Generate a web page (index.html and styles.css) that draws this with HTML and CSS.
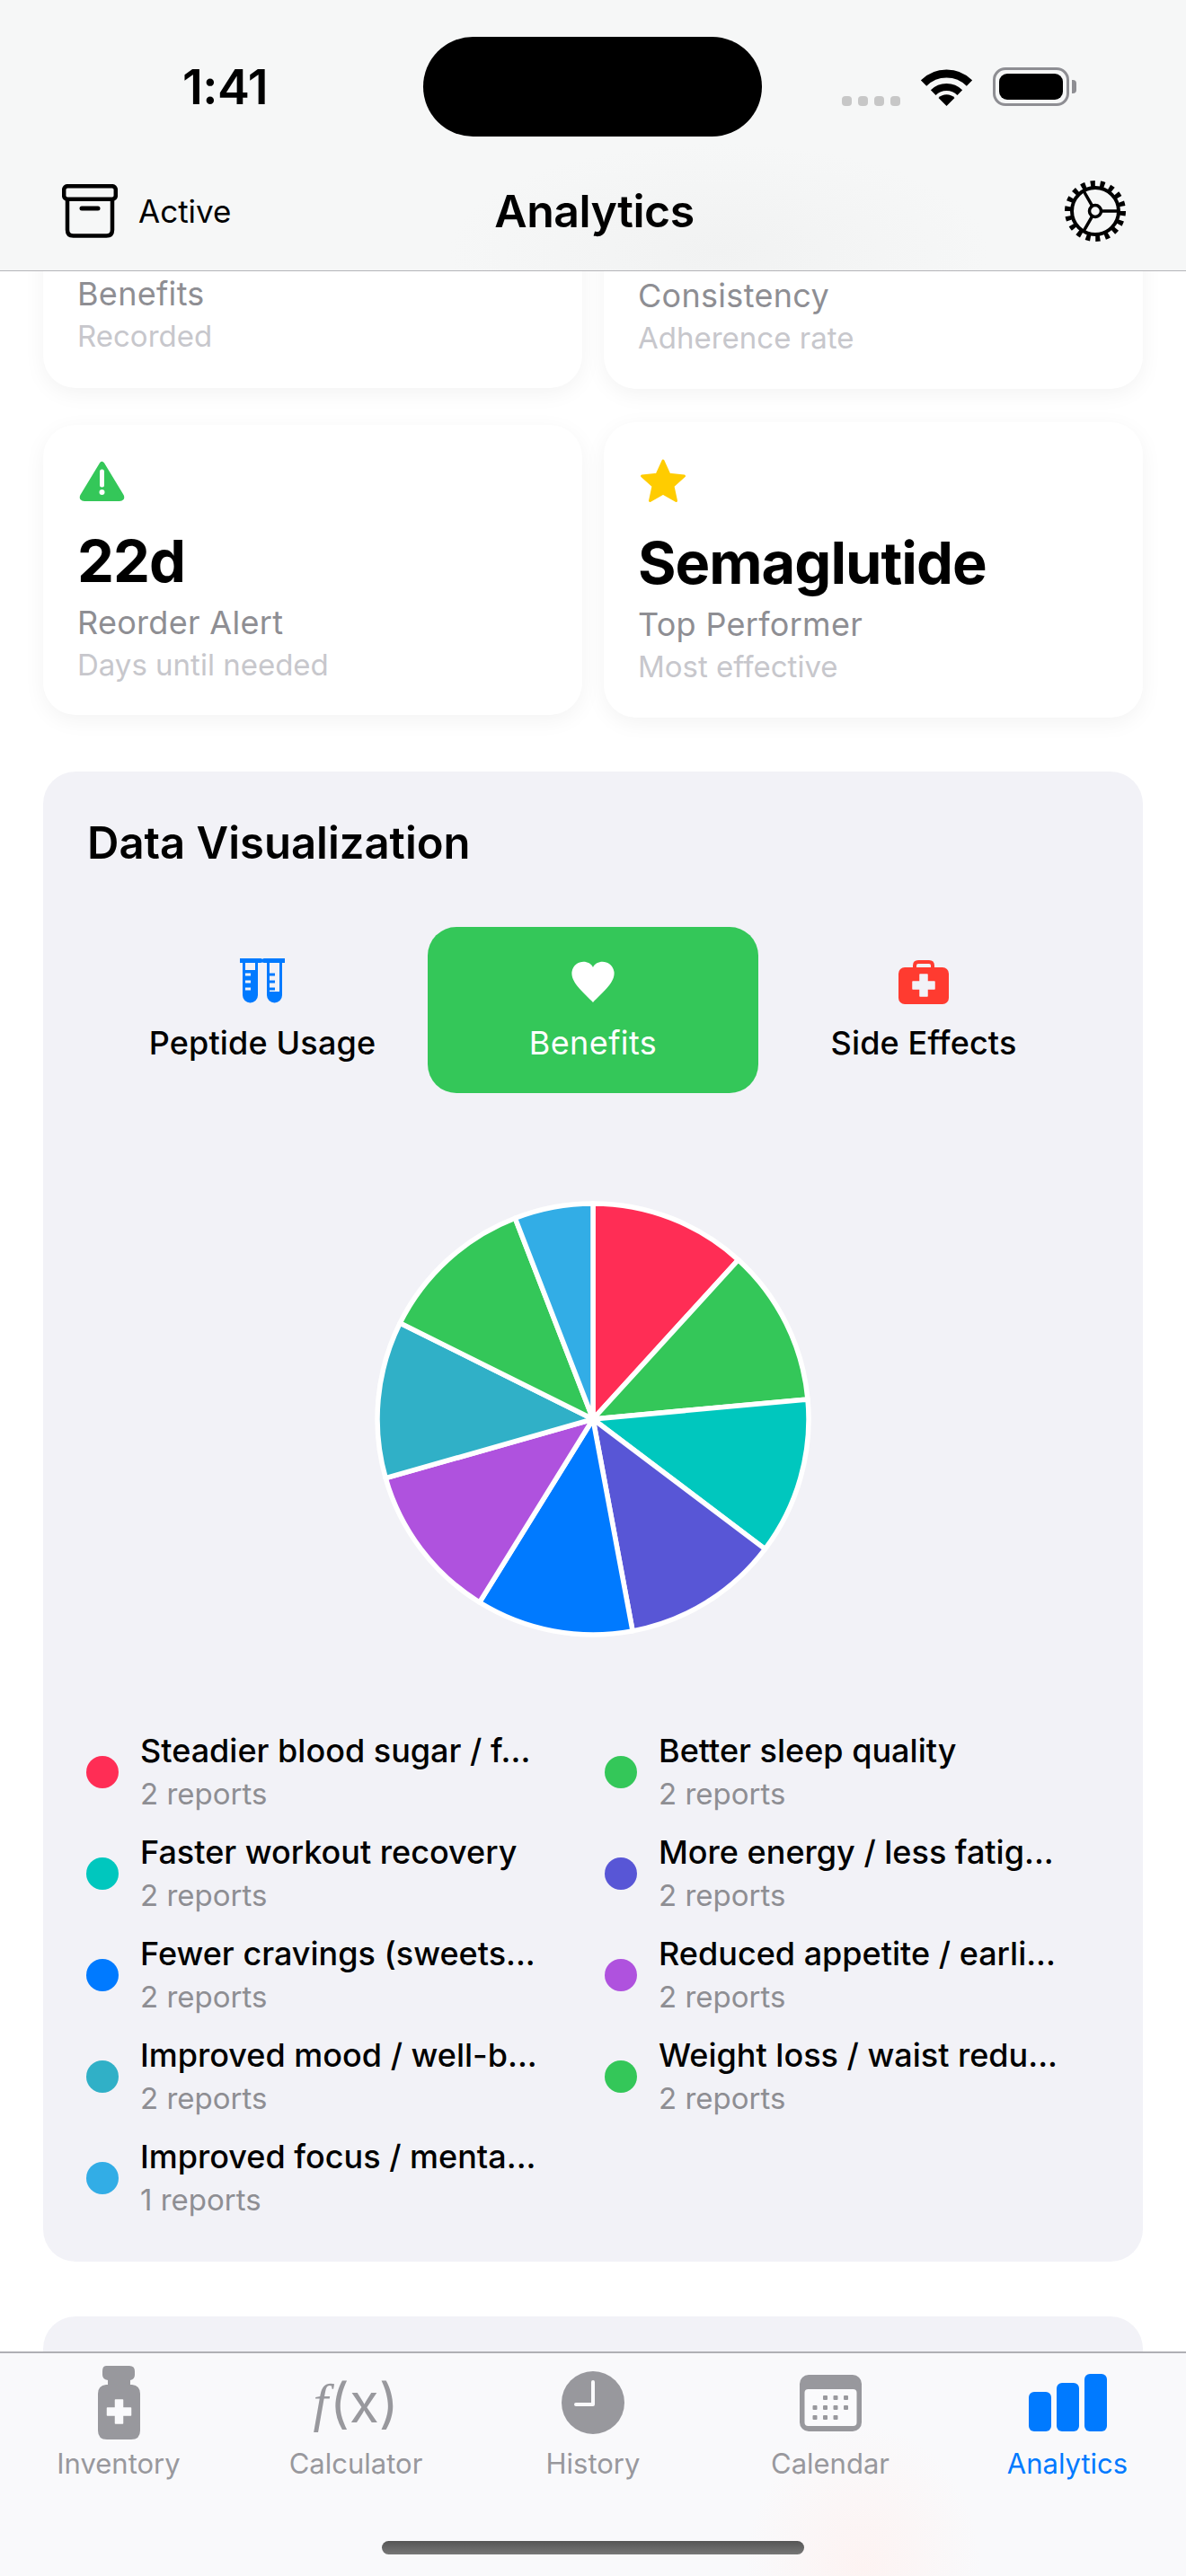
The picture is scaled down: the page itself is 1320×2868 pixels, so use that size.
FILE: index.html
```html
<!DOCTYPE html>
<html lang="en">
<head>
    <meta charset="UTF-8">
    <meta name="viewport" content="width=device-width, initial-scale=1.0">
    <title>Analytics</title>
    <link rel="stylesheet" href="styles.css">
</head>
<body>
    <div class="phone">
        <header class="top-bar">
            <div class="status-bar">
                <div class="status-time">1:41</div>
                <div class="island"></div>
                <div class="status-icons">
                    <div class="signal"><span></span><span></span><span></span><span></span></div>
                    <svg class="wifi" width="57" height="42" viewBox="0 0 57 42">
                        <path d="M3 16.5A36 36 0 0 1 54 16.5" fill="none" stroke="#000" stroke-width="9"/>
                        <path d="M13.7 27.2A21 21 0 0 1 43.3 27.2" fill="none" stroke="#000" stroke-width="8"/>
                        <path d="M28.5 42L19.5 33A12.7 12.7 0 0 1 37.5 33Z" fill="#000"/>
                    </svg>
                    <div class="battery"><div class="battery-fill"></div></div>
                    <div class="battery-nub"></div>
                </div>
            </div>
            <nav class="nav-bar">
                <div class="nav-left">
                    <svg width="62" height="60" viewBox="0 0 62 60" fill="none" stroke="#000" stroke-width="4.5">
                        <rect x="2.2" y="2.2" width="57.6" height="14.6" rx="4"/>
                        <path d="M6 17V51Q6 57.6 12.6 57.6H49.4Q56 57.6 56 51V17"/>
                        <path d="M22 27H40" stroke-width="5" stroke-linecap="round"/>
                    </svg>
                    <span>Active</span>
                </div>
                <h1 class="nav-title">Analytics</h1>
                <svg class="gear" width="70" height="70" viewBox="-35 -35 70 70" fill="none" stroke="#000">
                    <circle r="30.5" stroke-width="7" stroke-dasharray="5 5.64"/>
                    <circle r="26" stroke-width="4"/>
                    <circle r="6.5" stroke-width="3.5"/>
                    <path d="M6.5 0H26M-3.3 5.6L-13 22.5M-3.3 -5.6L-13 -22.5" stroke-width="3.5"/>
                </svg>
            </nav>
        </header>

        <main class="scroll">
            <div class="scroll-inner">
                <section class="stat-grid">
                    <div class="stat-card stat-card-clipped">
                        <div class="stat-label">Benefits</div>
                        <div class="stat-sub">Recorded</div>
                    </div>
                    <div class="stat-card stat-card-clipped stat-card-wide">
                        <div class="stat-label">Consistency</div>
                        <div class="stat-sub">Adherence rate</div>
                    </div>
                    <div class="stat-card">
                        <svg class="stat-icon" width="51" height="45" viewBox="0 0 51 45">
                            <path d="M25.5 4L47 39.5Q48 42 45 42H6Q3 42 4 39.5Z" fill="#34c759" stroke="#34c759" stroke-width="6" stroke-linejoin="round"/>
                            <path d="M25.5 12V27" stroke="#fff" stroke-width="5" stroke-linecap="round"/>
                            <circle cx="25.5" cy="35" r="3" fill="#fff"/>
                        </svg>
                        <div class="stat-value">22d</div>
                        <div class="stat-label">Reorder Alert</div>
                        <div class="stat-sub">Days until needed</div>
                    </div>
                    <div class="stat-card stat-card-top">
                        <svg class="stat-icon star" width="54" height="50" viewBox="0 0 54 50">
                            <path d="M27 3L33.8 18.2L50.5 20L38 31.2L41.5 47.5L27 39.2L12.5 47.5L16 31.2L3.5 20L20.2 18.2Z" fill="#ffcc00" stroke="#ffcc00" stroke-width="3" stroke-linejoin="round"/>
                        </svg>
                        <div class="stat-value">Semaglutide</div>
                        <div class="stat-label">Top Performer</div>
                        <div class="stat-sub">Most effective</div>
                    </div>
                </section>

                <section class="panel">
                    <h2 class="panel-title">Data Visualization</h2>
                    <div class="tabs">
                        <div class="tab">
                            <svg class="tab-icon" width="50" height="52" viewBox="0 0 50 52">
                                <path d="M0 2.5H23" stroke="#007aff" stroke-width="5" stroke-linecap="round"/>
                                <path d="M3 3V41A8.5 8.5 0 0 0 20 41V3Z" fill="#007aff"/>
                                <path d="M6 5H17V13H6Z" fill="#f2f2f7"/>
                                <path d="M6 18H12M6 26H12M6 34H12" stroke="#f2f2f7" stroke-width="3"/>
                                <path d="M27 2.5H50" stroke="#007aff" stroke-width="5" stroke-linecap="round"/>
                                <path d="M30 3V41A8.5 8.5 0 0 0 47 41V3Z" fill="#007aff"/>
                                <path d="M33 5H44V37H33Z" fill="#f2f2f7"/>
                                <path d="M33 18H39M33 26H39M33 34H39" stroke="#007aff" stroke-width="3"/>
                            </svg>
                            <span class="tab-label">Peptide Usage</span>
                        </div>
                        <div class="tab tab-active">
                            <svg class="tab-icon" width="48" height="52" viewBox="0 0 48 52">
                                <path d="M24 10C20 1 3 1 0.5 15C-1 27 14 38 24 49C34 38 49 27 47.5 15C45 1 28 1 24 10Z" fill="#fff"/>
                            </svg>
                            <span class="tab-label">Benefits</span>
                        </div>
                        <div class="tab">
                            <svg class="tab-icon" width="56" height="52" viewBox="0 0 56 52">
                                <path d="M18 12V8Q18 4 22 4H34Q38 4 38 8V12" fill="none" stroke="#ff3b30" stroke-width="4"/>
                                <rect x="0" y="10" width="56" height="41" rx="7" fill="#ff3b30"/>
                                <path d="M24 18H32V26H40V34H32V42H24V34H16V26H24Z" fill="#f2f2f7" stroke="#f2f2f7" stroke-width="1.5" stroke-linejoin="round"/>
                            </svg>
                            <span class="tab-label">Side Effects</span>
                        </div>
                    </div>

                    <svg class="pie" width="490" height="490" viewBox="-245 -245 490 490" stroke="#fff" stroke-width="5.5" stroke-linejoin="round">
                        <path fill="#ff2d55" d="M0 0L0 -240A240 240 0 0 1 161.7 -177.4Z"/>
                        <path fill="#34c759" d="M0 0L161.7 -177.4A240 240 0 0 1 239 -22.1Z"/>
                        <path fill="#00c7be" d="M0 0L239 -22.1A240 240 0 0 1 191.5 144.6Z"/>
                        <path fill="#5856d6" d="M0 0L191.5 144.6A240 240 0 0 1 44.1 235.9Z"/>
                        <path fill="#007aff" d="M0 0L44.1 235.9A240 240 0 0 1 -126.3 204Z"/>
                        <path fill="#af52de" d="M0 0L-126.3 204A240 240 0 0 1 -230.8 65.7Z"/>
                        <path fill="#30b0c7" d="M0 0L-230.8 65.7A240 240 0 0 1 -214.8 -107Z"/>
                        <path fill="#34c759" d="M0 0L-214.8 -107A240 240 0 0 1 -86.7 -223.8Z"/>
                        <path fill="#32ade6" d="M0 0L-86.7 -223.8A240 240 0 0 1 0 -240Z"/>
                    </svg>

                    <div class="legend">
                        <div class="legend-item">
                            <span class="dot dot-red"></span>
                            <div><div class="legend-name">Steadier blood sugar / f...</div><div class="legend-count">2 reports</div></div>
                        </div>
                        <div class="legend-item">
                            <span class="dot dot-green"></span>
                            <div><div class="legend-name">Better sleep quality</div><div class="legend-count">2 reports</div></div>
                        </div>
                        <div class="legend-item">
                            <span class="dot dot-teal"></span>
                            <div><div class="legend-name">Faster workout recovery</div><div class="legend-count">2 reports</div></div>
                        </div>
                        <div class="legend-item">
                            <span class="dot dot-indigo"></span>
                            <div><div class="legend-name">More energy / less fatig...</div><div class="legend-count">2 reports</div></div>
                        </div>
                        <div class="legend-item">
                            <span class="dot dot-blue"></span>
                            <div><div class="legend-name">Fewer cravings (sweets...</div><div class="legend-count">2 reports</div></div>
                        </div>
                        <div class="legend-item">
                            <span class="dot dot-purple"></span>
                            <div><div class="legend-name">Reduced appetite / earli...</div><div class="legend-count">2 reports</div></div>
                        </div>
                        <div class="legend-item">
                            <span class="dot dot-cyan"></span>
                            <div><div class="legend-name">Improved mood / well-b...</div><div class="legend-count">2 reports</div></div>
                        </div>
                        <div class="legend-item">
                            <span class="dot dot-green"></span>
                            <div><div class="legend-name">Weight loss / waist redu...</div><div class="legend-count">2 reports</div></div>
                        </div>
                        <div class="legend-item">
                            <span class="dot dot-sky"></span>
                            <div><div class="legend-name">Improved focus / menta...</div><div class="legend-count">1 reports</div></div>
                        </div>
                    </div>
                </section>

                <section class="panel panel-next"></section>
            </div>
        </main>

        <footer class="tab-bar">
            <div class="bar-items">
                <div class="bar-item">
                    <div class="bar-icon">
                        <svg width="47" height="82" viewBox="0 0 47 82">
                            <path d="M9 0H35Q41 0 41 6V10Q41 15 36 16V21H38Q47 22 47 31V72Q47 82 37 82H10Q0 82 0 72V31Q0 22 9 21H11V16Q5 15 5 10V6Q5 0 9 0Z" fill="#98989d"/>
                            <path d="M19.5 38H27.5V47H36.5V55H27.5V64H19.5V55H10.5V47H19.5Z" fill="#fafafc" stroke="#fafafc" stroke-width="1.5" stroke-linejoin="round"/>
                        </svg>
                    </div>
                    <span>Inventory</span>
                </div>
                <div class="bar-item">
                    <div class="bar-icon fx"><i>f</i>(x)</div>
                    <span>Calculator</span>
                </div>
                <div class="bar-item">
                    <div class="bar-icon">
                        <svg width="70" height="70" viewBox="0 0 70 70">
                            <circle cx="35" cy="35" r="35" fill="#98989d"/>
                            <path d="M35 12V37H16" fill="none" stroke="#fafafc" stroke-width="4" stroke-linecap="round" stroke-linejoin="round"/>
                        </svg>
                    </div>
                    <span>History</span>
                </div>
                <div class="bar-item">
                    <div class="bar-icon">
                        <svg width="69" height="63" viewBox="0 0 69 63">
                            <rect width="69" height="63" rx="10" fill="#98989d"/>
                            <rect x="5.5" y="16" width="58" height="41" rx="4" fill="#fafafc"/>
                            <g fill="#98989d">
                                <rect x="26" y="23" width="5" height="5" rx="1"/><rect x="37.500" y="23" width="5" height="5" rx="1"/><rect x="49" y="23" width="5" height="5" rx="1"/>
                                <rect x="14.500" y="34" width="5" height="5" rx="1"/><rect x="26" y="34" width="5" height="5" rx="1"/><rect x="37.500" y="34" width="5" height="5" rx="1"/><rect x="49" y="34" width="5" height="5" rx="1"/>
                                <rect x="14.500" y="45" width="5" height="5" rx="1"/><rect x="26" y="45" width="5" height="5" rx="1"/><rect x="37.500" y="45" width="5" height="5" rx="1"/>
                            </g>
                        </svg>
                    </div>
                    <span>Calendar</span>
                </div>
                <div class="bar-item bar-item-active">
                    <div class="bar-icon">
                        <svg width="87" height="64" viewBox="0 0 87 64" fill="#007aff">
                            <rect x="0" y="20" width="25" height="44" rx="6"/>
                            <rect x="31" y="10" width="25" height="54" rx="6"/>
                            <rect x="62" y="0" width="25" height="64" rx="6"/>
                        </svg>
                    </div>
                    <span>Analytics</span>
                </div>
            </div>
            <div class="home-indicator"></div>
        </footer>
    </div>
</body>
</html>
```

FILE: styles.css
```css
* {
    box-sizing: border-box;
}
body {
    margin: 0;
    background: #fff;
    font-family: 'Inter', 'Liberation Sans', sans-serif;
    color: #000;
}
.phone {
    width: 1320px;
    height: 2868px;
    display: flex;
    flex-direction: column;
    overflow: hidden;
}

/* top bar */
.top-bar {
    flex: none;
    height: 302px;
    background: radial-gradient(ellipse 300px 120px at 800px 280px, #f1f2f2, #f6f7f7);
    border-bottom: 1px solid #b4b4b8;
}
.status-bar {
    display: grid;
    grid-template-columns: 471px 377px 1fr;
    padding-top: 41px;
    height: 152px;
}
.status-time {
    padding-left: 30px;
    text-align: center;
    font-size: 54px;
    font-weight: 600;
    line-height: 111px;
    letter-spacing: -0.5px;
}
.island {
    height: 111px;
    border-radius: 56px;
    background: #000;
}
.status-icons {
    display: flex;
    align-items: flex-end;
    height: 77px;
    padding-left: 89px;
}
.signal {
    display: flex;
    gap: 7px;
    margin-right: 23px;
}
.signal span {
    width: 11px;
    height: 11px;
    border-radius: 4px;
    background: #c7c7c7;
}
.battery {
    width: 85px;
    height: 43px;
    margin-left: 23px;
    padding: 4px;
    border: 3px solid #8e8e93;
    border-radius: 14px;
}
.battery-fill {
    height: 100%;
    border-radius: 9px;
    background: #000;
}
.battery-nub {
    width: 5px;
    height: 15px;
    margin: 0 0 14px 3px;
    border-radius: 0 4px 4px 0;
    background: #8e8e93;
}
.nav-bar {
    display: grid;
    grid-template-columns: 1fr auto 1fr;
    align-items: center;
    height: 149px;
    padding: 17px 66px 0 69px;
}
.nav-left {
    display: flex;
    align-items: center;
    gap: 23px;
    font-size: 35px;
}
.nav-title {
    margin: 0;
    font-size: 50px;
    font-weight: 600;
    letter-spacing: -0.5px;
}
.gear {
    justify-self: end;
}

/* scrolled content */
.scroll {
    flex: 1;
    min-height: 0;
    overflow: hidden;
}
.scroll-inner {
    margin-top: -195px;
    padding: 0 48px;
}
.stat-grid {
    display: grid;
    grid-template-columns: 600px 600px;
    column-gap: 24px;
    row-gap: 37px;
    align-items: center;
}
.stat-card {
    height: 323px;
    padding: 40px 38px 0;
    background: #fff;
    border-radius: 36px;
    box-shadow: 0 6px 24px rgba(0, 0, 0, 0.05);
}
.stat-card-top {
    height: 329px;
}
/* top row is scrolled under the header, only its labels show */
.stat-card-clipped {
    display: flex;
    flex-direction: column;
    justify-content: flex-end;
    padding-bottom: 36px;
}
.stat-card-wide {
    height: 326px;
    padding-bottom: 35px;
}
.stat-icon {
    display: block;
    height: 45px;
    margin-left: 2px;
}
.stat-icon.star {
    height: 50px;
    margin-left: 1px;
}
.stat-value {
    margin-top: 27px;
    font-size: 65px;
    font-weight: 700;
    line-height: 80px;
    letter-spacing: -1px;
}
.stat-label {
    margin-top: 4px;
    font-size: 36px;
    line-height: 48px;
    letter-spacing: 0.3px;
    color: #8e8e93;
}
.stat-sub {
    margin-top: 1px;
    font-size: 33px;
    line-height: 44px;
    color: #c7c7cc;
}

/* data panel */
.panel {
    margin-top: 60px;
    padding: 50px 48px 46px;
    background: #f2f2f7;
    border-radius: 36px;
}
.panel-title {
    margin: 0 0 63px 1px;
    font-size: 49px;
    font-weight: 600;
    line-height: 60px;
}
.tabs {
    display: grid;
    grid-template-columns: repeat(3, 368px);
    height: 185px;
    margin-left: 12px;
}
.tab {
    display: flex;
    flex-direction: column;
    align-items: center;
    padding-top: 35px;
    border-radius: 32px;
}
.tab-active {
    background: #34c759;
    color: #fff;
}
.tab-icon {
    display: block;
}
.tab-label {
    margin-top: 20px;
    font-size: 36px;
    font-weight: 500;
    line-height: 44px;
    letter-spacing: 0.15px;
}
.tab-active .tab-label {
    font-weight: 400;
    letter-spacing: 0.4px;
}
.pie {
    display: block;
    margin: 118px auto 0;
}
.legend {
    display: grid;
    grid-template-columns: 577px 1fr;
    row-gap: 19px;
    margin-top: 101px;
}
.legend-item {
    display: flex;
    align-items: center;
    gap: 24px;
}
.dot {
    flex: none;
    width: 36px;
    height: 36px;
    border-radius: 50%;
}
.dot-red { background: #ff2d55; }
.dot-green { background: #34c759; }
.dot-teal { background: #00c7be; }
.dot-indigo { background: #5856d6; }
.dot-blue { background: #007aff; }
.dot-purple { background: #af52de; }
.dot-cyan { background: #30b0c7; }
.dot-sky { background: #32ade6; }
.legend-name {
    font-size: 36px;
    font-weight: 450;
    line-height: 46px;
    white-space: nowrap;
}
.legend-count {
    margin-top: 2px;
    font-size: 33px;
    line-height: 46px;
    color: #8e8e93;
}
.panel-next {
    height: 200px;
    margin-top: 61px;
}

/* bottom tab bar */
.tab-bar {
    flex: none;
    height: 250px;
    background: radial-gradient(ellipse 130px 160px at 960px 240px, #fdf3f2, #f9f9fb);
    border-top: 2px solid #b0b0b5;
}
.bar-items {
    display: grid;
    grid-template-columns: repeat(5, 264px);
    padding-top: 13px;
}
.bar-item {
    display: flex;
    flex-direction: column;
    align-items: center;
    font-size: 31px;
    line-height: 40px;
    color: #98989d;
}
.bar-item-active {
    color: #007aff;
}
.bar-icon {
    display: flex;
    align-items: center;
    justify-content: center;
    height: 84px;
    margin-bottom: 6px;
}
.fx {
    font-size: 60px;
    font-weight: 400;
    line-height: 84px;
    white-space: nowrap;
}
.fx i {
    font-family: 'Liberation Serif', serif;
    margin-right: 2px;
}
.home-indicator {
    width: 470px;
    height: 15px;
    margin: 66px auto 0;
    border-radius: 8px;
    background: linear-gradient(#555, #777);
}
```
